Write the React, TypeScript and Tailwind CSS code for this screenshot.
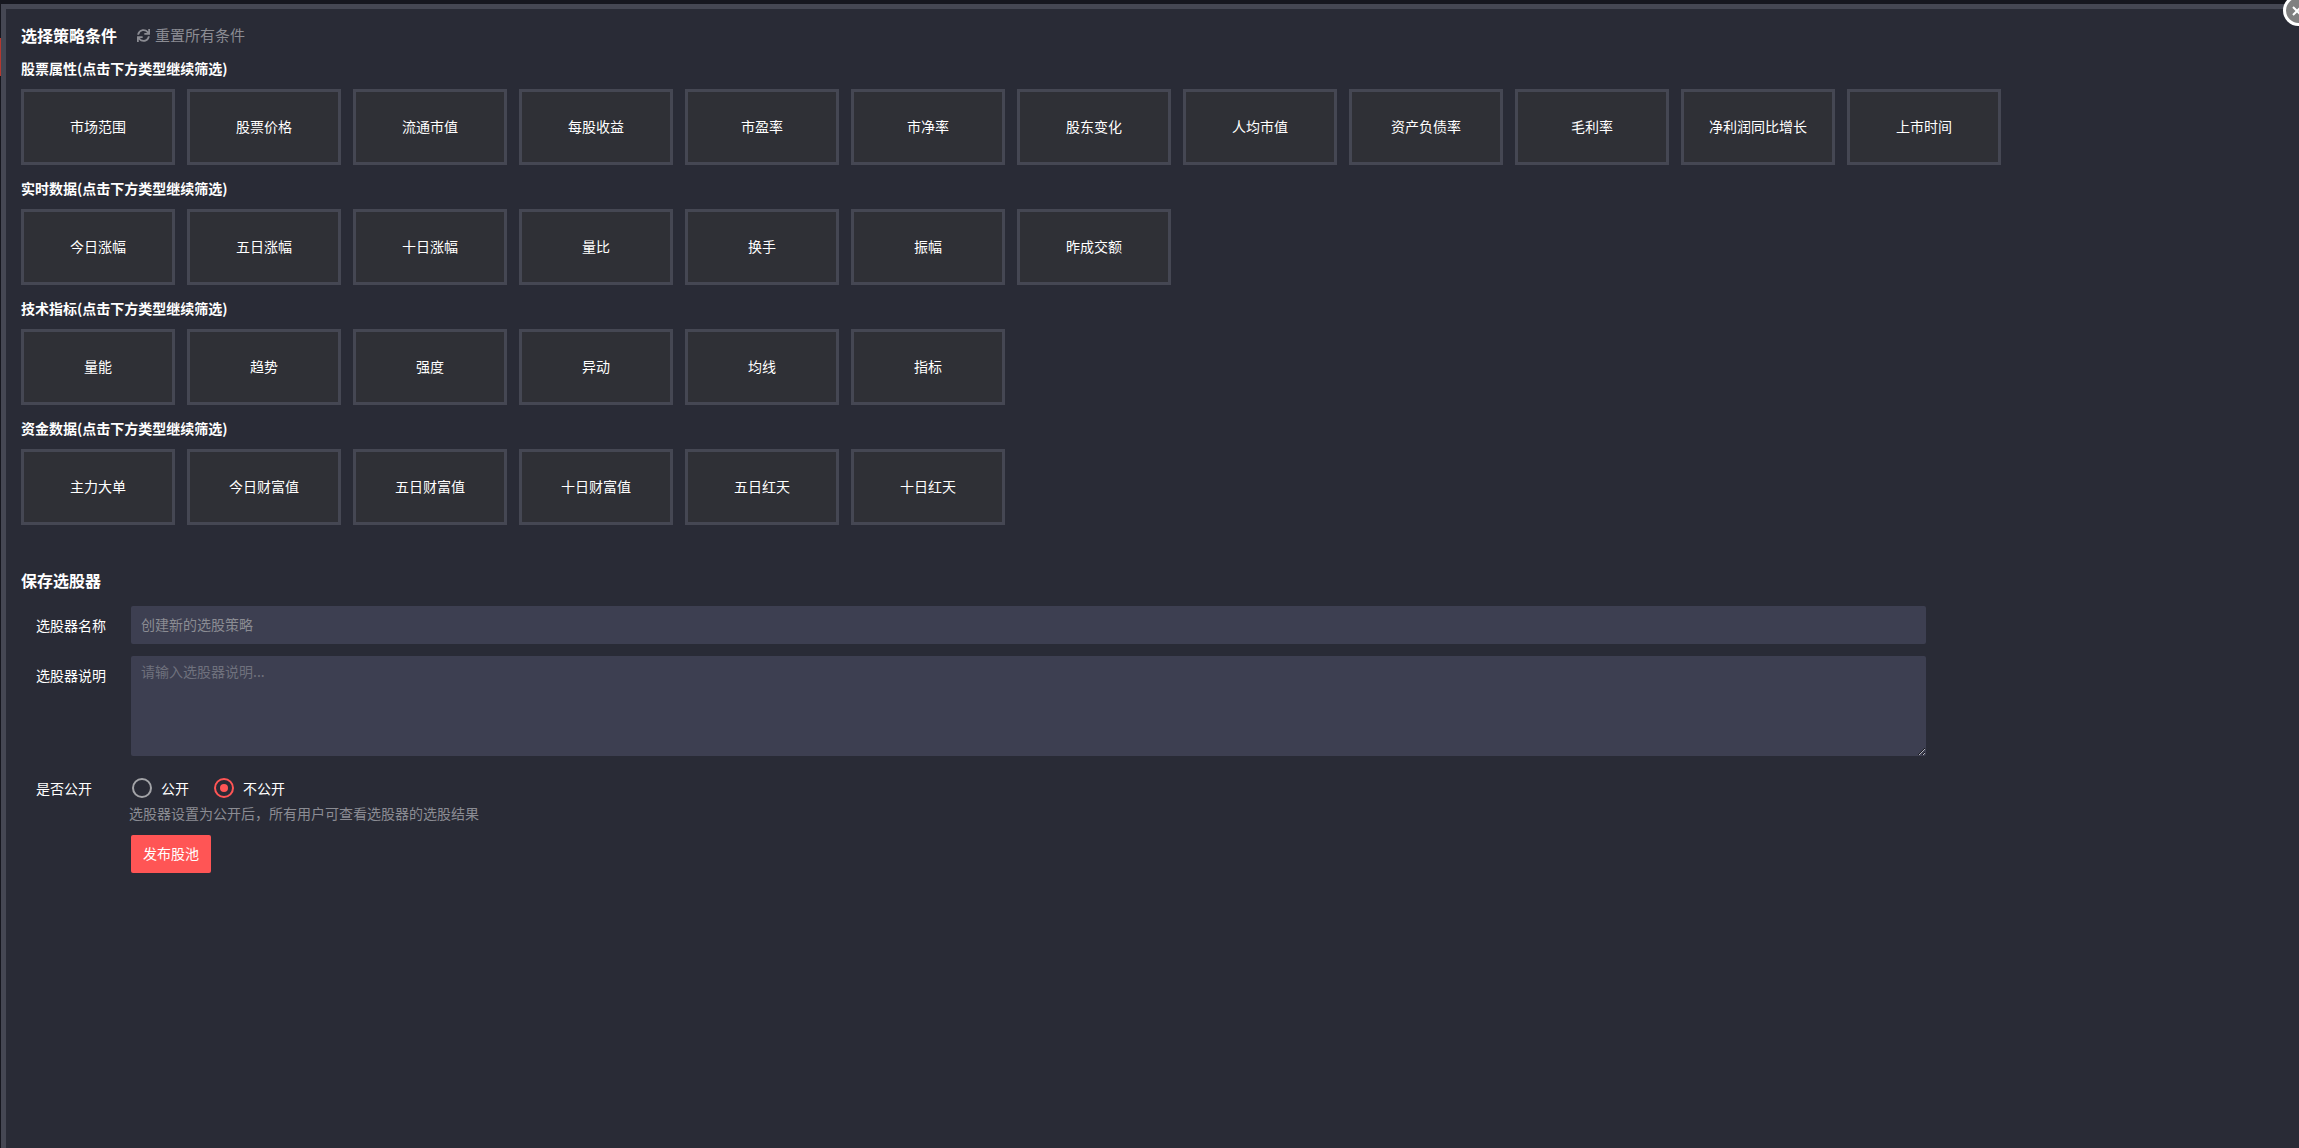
import React from 'react';
import { FaSync } from 'react-icons/fa';

const fontStack = 'font-["Microsoft_YaHei","Noto_Sans_CJK_SC",sans-serif]';

const groups = [
  {
    title: '股票属性(点击下方类型继续筛选)',
    items: ['市场范围', '股票价格', '流通市值', '每股收益', '市盈率', '市净率', '股东变化', '人均市值', '资产负债率', '毛利率', '净利润同比增长', '上市时间'],
  },
  {
    title: '实时数据(点击下方类型继续筛选)',
    items: ['今日涨幅', '五日涨幅', '十日涨幅', '量比', '换手', '振幅', '昨成交额'],
  },
  {
    title: '技术指标(点击下方类型继续筛选)',
    items: ['量能', '趋势', '强度', '异动', '均线', '指标'],
  },
  {
    title: '资金数据(点击下方类型继续筛选)',
    items: ['主力大单', '今日财富值', '五日财富值', '十日财富值', '五日红天', '十日红天'],
  },
];

const Group: React.FC<{ title: string; items: string[] }> = ({ title, items }) => (
  <div className="mb-[14px]">
    <div className="h-5 mb-[10px] text-sm leading-[18px] font-bold text-white">{title}</div>
    <div className="flex gap-3">
      {items.map((item) => (
        <div
          key={item}
          className="w-[154px] h-[76px] pb-[2px] flex items-center justify-center border-[3px] border-[#454753] bg-[#2f3036] text-sm text-white"
        >
          {item}
        </div>
      ))}
    </div>
  </div>
);

export default function App() {
  return (
    <div className={`relative h-screen overflow-hidden bg-[#16171f] pt-1 pl-px ${fontStack}`}>
      <div className="absolute left-0 top-[38px] w-px h-[38px] bg-[#b5382f]" />
      <div className="h-full border-t-[5px] border-l-[5px] border-[#454753] bg-[#292b36] pl-[15px] pt-[16px]">
        <div className="flex items-center h-[20px] mb-[14px]">
          <span className="text-base font-bold text-white">选择策略条件</span>
          <span className="ml-5 flex items-center gap-[5px] text-[15px] text-[#8b8c93]">
            <FaSync size={13} />
            重置所有条件
          </span>
        </div>

        {groups.map((g) => (
          <Group key={g.title} title={g.title} items={g.items} />
        ))}

        <div className="mt-[43px] h-6 mb-[14px] text-base leading-6 font-bold text-white">保存选股器</div>

        <div className="flex mb-3">
          <label className="w-[110px] pl-[15px] text-sm leading-[38px] text-white">选股器名称</label>
          <input
            placeholder="创建新的选股策略"
            className="w-[1795px] h-[38px] pb-[2px] rounded-[2px] bg-[#3d3f51] px-[10px] text-sm text-white outline-none placeholder:text-[#8b8c93]"
          />
        </div>
        <div className="flex mb-[18px]">
          <label className="w-[110px] pl-[15px] text-sm leading-[38px] text-white">选股器说明</label>
          <textarea
            placeholder="请输入选股器说明..."
            className="w-[1795px] h-[100px] rounded-[2px] bg-[#3d3f51] px-[10px] py-[5px] text-sm text-white outline-none placeholder:text-[#6f717d]"
          />
        </div>

        <div className="flex">
          <label className="w-[110px] pl-[15px] text-sm leading-[28px] text-white">是否公开</label>
          <div>
            <div className="flex items-center h-[28px] text-sm text-white">
              <span className="ml-px w-5 h-5 rounded-full border-2 border-[#a3a4a8]" />
              <span className="ml-[9px]">公开</span>
              <span className="ml-[25px] w-5 h-5 rounded-full border-2 border-[#ff5555] flex items-center justify-center">
                <span className="w-2 h-2 rounded-full bg-[#ff5555]" />
              </span>
              <span className="ml-[9px]">不公开</span>
            </div>
            <div className="-ml-0.5 mt-px text-sm leading-5 text-[#8b8c93]">选股器设置为公开后，所有用户可查看选股器的选股结果</div>
            <button className="mt-3 w-20 h-[38px] pb-[2px] rounded-[2px] bg-[#ff5555] text-sm text-white">发布股池</button>
          </div>
        </div>
      </div>

      <div className="absolute top-[-5px] right-[-15px] w-[31px] h-[31px] rounded-full border-[3px] border-white bg-[#808080]">
        <svg viewBox="0 0 10 10" className="absolute left-[6px] top-[8px] w-[10px] h-[10px]" stroke="#fff" strokeWidth="2" fill="none">
          <path d="M1 1l8 8M9 1l-8 8" />
        </svg>
      </div>
    </div>
  );
}
